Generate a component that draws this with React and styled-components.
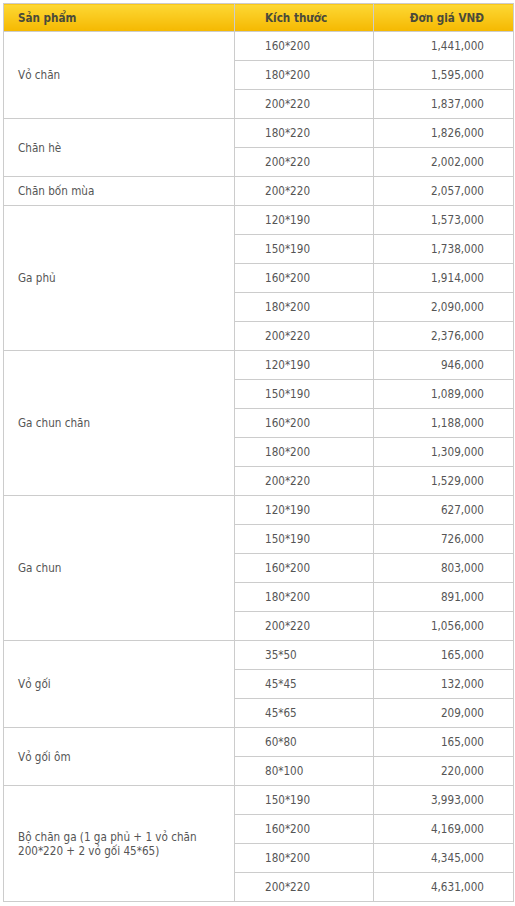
import React from 'react'
import styled, { createGlobalStyle } from 'styled-components'

const groups = [
  { name: 'Vỏ chăn', items: [['160*200', '1,441,000'], ['180*200', '1,595,000'], ['200*220', '1,837,000']] },
  { name: 'Chăn hè', items: [['180*220', '1,826,000'], ['200*220', '2,002,000']] },
  { name: 'Chăn bốn mùa', items: [['200*220', '2,057,000']] },
  {
    name: 'Ga phủ',
    items: [['120*190', '1,573,000'], ['150*190', '1,738,000'], ['160*200', '1,914,000'], ['180*200', '2,090,000'], ['200*220', '2,376,000']]
  },
  {
    name: 'Ga chun chăn',
    items: [['120*190', '946,000'], ['150*190', '1,089,000'], ['160*200', '1,188,000'], ['180*200', '1,309,000'], ['200*220', '1,529,000']]
  },
  {
    name: 'Ga chun',
    items: [['120*190', '627,000'], ['150*190', '726,000'], ['160*200', '803,000'], ['180*200', '891,000'], ['200*220', '1,056,000']]
  },
  { name: 'Vỏ gối', items: [['35*50', '165,000'], ['45*45', '132,000'], ['45*65', '209,000']] },
  { name: 'Vỏ gối ôm', items: [['60*80', '165,000'], ['80*100', '220,000']] },
  {
    name: 'Bộ chăn ga (1 ga phủ + 1 vỏ chăn 200*220 + 2 vỏ gối 45*65)',
    items: [['150*190', '3,993,000'], ['160*200', '4,169,000'], ['180*200', '4,345,000'], ['200*220', '4,631,000']]
  }
]

const GlobalStyle = createGlobalStyle`
  body {
    margin: 0;
    background: #fff;
    font-family: "DejaVu Sans Condensed", "DejaVu Sans", Verdana, sans-serif;
    font-stretch: condensed;
  }
`

const Page = styled.div`
  padding: 3px 2px 3px 3px;
`

const PriceTable = styled.table`
  width: 510px;
  border-collapse: collapse;
  table-layout: fixed;
  font-size: 11.6px;
  color: #555;
`

const HeadCell = styled.th`
  height: 27px;
  padding: 0 ${p => p.$padRight || 0}px 0 ${p => p.$pad || 0}px;
  text-align: ${p => p.$align || 'left'};
  font-weight: bold;
  color: #4a4a3a;
  border: 1px solid #ccc;
  background: linear-gradient(to bottom, #fdd835 0%, #f5b800 100%);
`

const Cell = styled.td`
  height: 28px;
  padding: 0 ${p => p.$padRight || 0}px 0 ${p => p.$pad || 0}px;
  text-align: ${p => p.$align || 'left'};
  border: 1px solid #ccc;
  vertical-align: middle;
  line-height: 14px;
`

export default function App() {
  return (
    <Page>
      <GlobalStyle />
      <PriceTable>
        <colgroup>
          <col style={{ width: 231 }} />
          <col style={{ width: 139 }} />
          <col style={{ width: 140 }} />
        </colgroup>
        <thead>
          <tr>
            <HeadCell $pad={14}>Sản phẩm</HeadCell>
            <HeadCell $pad={30}>Kích thước</HeadCell>
            <HeadCell $align="right" $padRight={29}>Đơn giá VNĐ</HeadCell>
          </tr>
        </thead>
        <tbody>
          {groups.map(g =>
            g.items.map(([size, price], i) => (
              <tr key={g.name + size}>
                {i === 0 && (
                  <Cell rowSpan={g.items.length} $pad={14} $padRight={20}>
                    {g.name}
                  </Cell>
                )}
                <Cell $pad={30}>{size}</Cell>
                <Cell $align="right" $padRight={29}>{price}</Cell>
              </tr>
            ))
          )}
        </tbody>
      </PriceTable>
    </Page>
  )
}
